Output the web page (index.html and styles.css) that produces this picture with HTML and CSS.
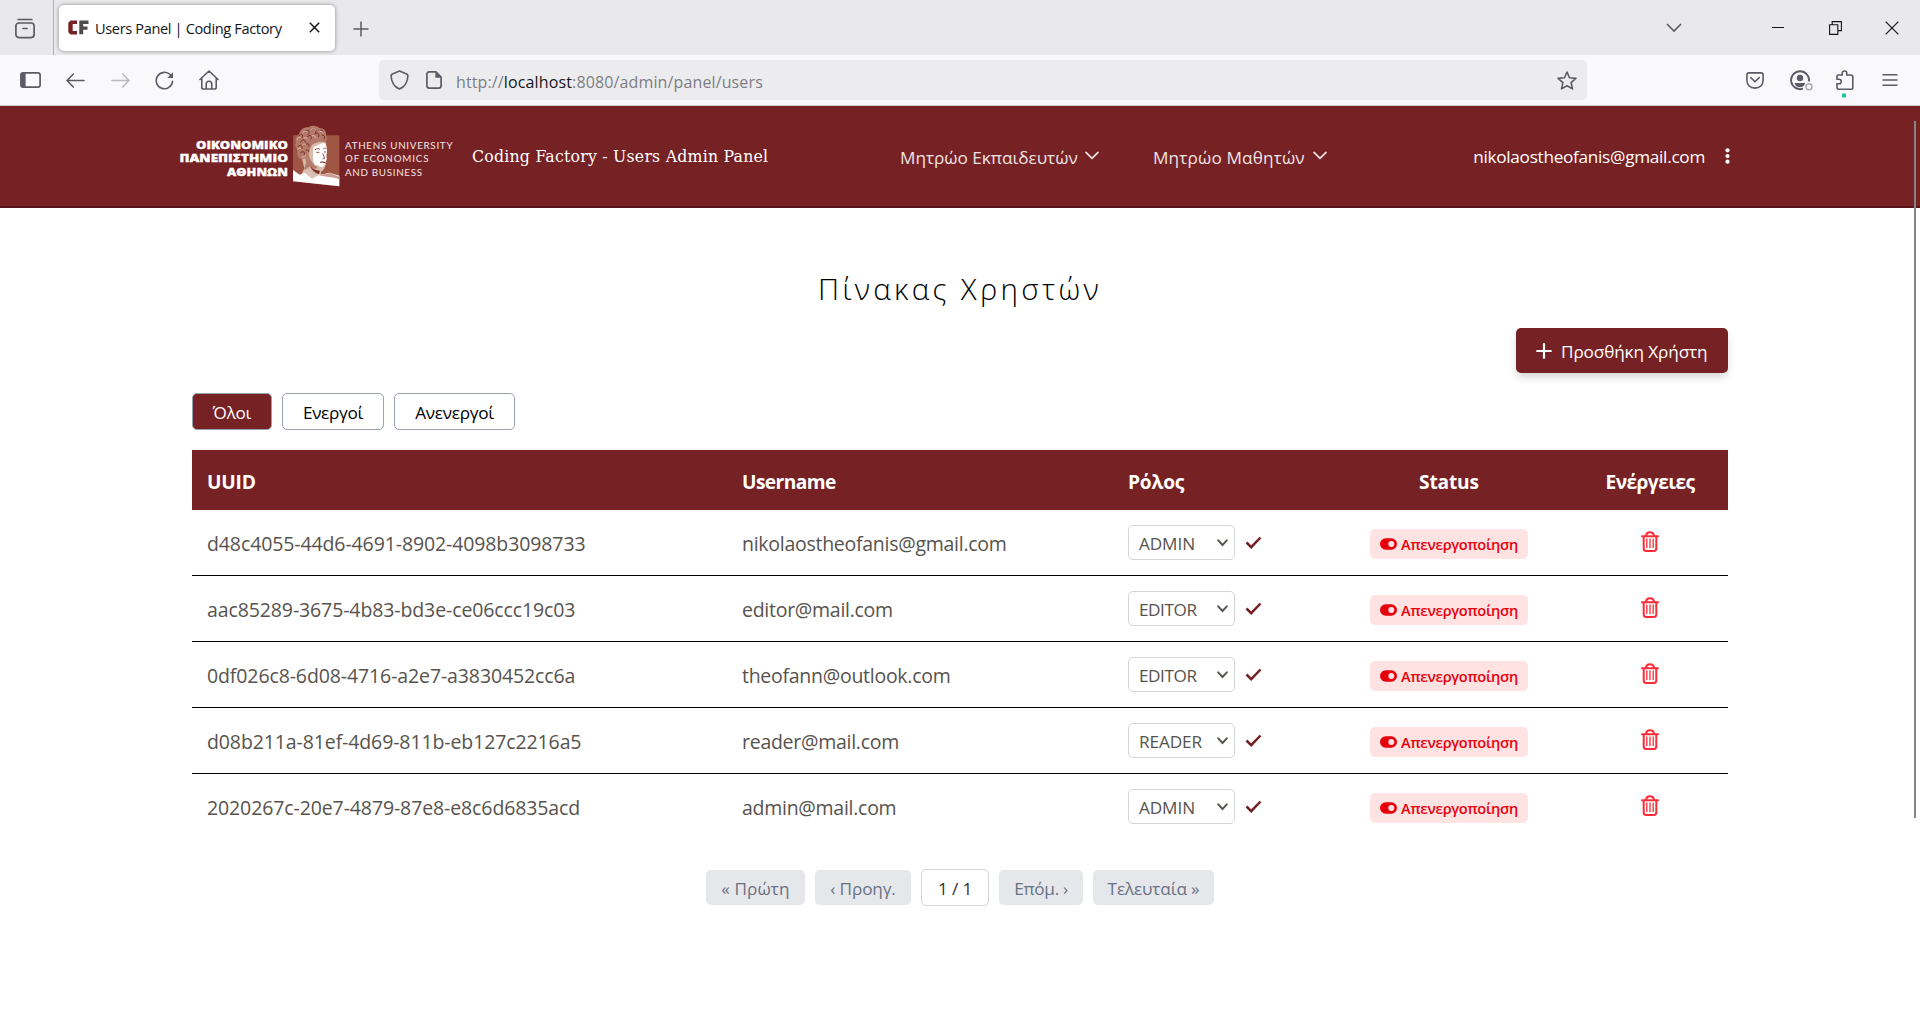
FILE: index.html
```html
<!DOCTYPE html>
<html lang="el">
<head>
<meta charset="utf-8">
<title>Users Panel | Coding Factory</title>
<link rel="stylesheet" href="styles.css">
</head>
<body>
<svg class="defs" width="0" height="0">
  <symbol id="trash" viewBox="0 0 18 21"><g fill="none" stroke="#fb2c36" stroke-linecap="round"><path stroke-width="2" d="M1 5.200h16M5 4.800C5.300 2.200 6.800 1.200 9 1.200s3.700 1 4 3.600M2.700 5.800v11.700c0 1.600.8 2.400 2.400 2.400h7.800c1.600 0 2.400-.8 2.400-2.400V5.800"/><path stroke-width="1.300" d="M5.800 8v8.500M9 8v8.500M12.200 8v8.500"/></g></symbol>
  <symbol id="toggle" viewBox="0 0 17 12"><rect y=".3" width="17" height="11.400" rx="5.700" fill="#e7000b"/><circle cx="11.300" cy="6" r="3" fill="#ffe2e2"/></symbol>
  <symbol id="check" viewBox="0 0 17 13"><path d="M1.500 6.500l4.700 4.700L15.500 1.500" fill="none" stroke="#762124" stroke-width="2.500"/></symbol>
  <symbol id="chev" viewBox="0 0 14 9"><path d="M1 1.300l6 6 6-6" fill="none" stroke="currentColor" stroke-width="1.700" stroke-linecap="round"/></symbol>
  <symbol id="caret" viewBox="0 0 11 8"><path d="M1.200 1.300l4.300 4.700 4.300-4.700" fill="none" stroke="currentColor" stroke-width="1.900" stroke-linecap="round"/></symbol>
</svg>

<div class="tabstrip">
  <div class="recent"><svg width="20" height="21" viewBox="0 0 20 21" fill="none" stroke="#5b5b66" stroke-width="1.700" stroke-linecap="round"><path d="M3.200 1.500h13.600"/><rect x=".9" y="5" width="18.200" height="14.600" rx="3"/><path d="M8 10.500h4"/></svg></div>
  <div class="tab">
    <svg width="21" height="15" viewBox="0 0 21 15"><path fill="#762124" d="M2.500.5H9V4H4.700v7H9v3.500H2.500L.3 12.300V2.700z"/><path fill="#4f4b4c" d="M11.300.5h9.200V4h-5.300v2.400h4.300v3.300h-4.300v4.500h-3.900z"/></svg>
    <span class="tab-title">Users Panel | Coding Factory</span>
    <svg class="tab-x" width="11" height="11" viewBox="0 0 11 11" stroke="#15141a" stroke-width="1.500"><path d="M.8.8l9.400 9.400M10.200.8L.8 10.200"/></svg>
  </div>
  <svg class="newtab" width="16" height="16" viewBox="0 0 16 16" stroke="#5b5b66" stroke-width="1.500"><path d="M8 .5v15M.5 8h15"/></svg>
  <div class="window-controls">
    <svg width="16" height="10" viewBox="0 0 16 10" fill="none" stroke="#5b5b66" stroke-width="1.600"><path d="M1 1l7 7 7-7"/></svg>
    <svg width="12" height="14" viewBox="0 0 12 14"><path d="M0 6.500h12" stroke="#15141a"/></svg>
    <svg width="13" height="14" viewBox="0 0 13 14" fill="none" stroke="#15141a" stroke-width="1.100"><path d="M.6 3.800h8.200v9.600H.6zM3.200 3.800V.6h9.200v9h-3.600"/></svg>
    <svg width="14" height="14" viewBox="0 0 14 14" stroke="#15141a" stroke-width="1.200"><path d="M.6.6l12.800 12.800M13.400.6L.6 13.400"/></svg>
  </div>
</div>

<div class="toolbar">
  <div class="nav-icons">
    <svg width="21" height="16" viewBox="0 0 21 16"><rect x=".9" y=".9" width="19.200" height="14.200" rx="2.200" fill="none" stroke="#5b5b66" stroke-width="1.700"/><path d="M1 1h4.600v14H1z" fill="#5b5b66"/></svg>
    <svg width="19" height="15" viewBox="0 0 19 15" fill="none" stroke="#5b5b66" stroke-width="1.600" stroke-linecap="round"><path d="M18 7.500H1.200M7.300 1L1 7.500l6.300 6.500"/></svg>
    <svg width="19" height="15" viewBox="0 0 19 15" fill="none" stroke="#b9b9c0" stroke-width="1.600" stroke-linecap="round"><path d="M1 7.500h16.800M11.700 1L18 7.500 11.700 14"/></svg>
    <svg width="19" height="19" viewBox="0 0 19 19" fill="none" stroke="#5b5b66" stroke-width="1.600" stroke-linecap="round"><path d="M17.600 10.200A8.200 8.200 0 1 1 15.500 4"/><path d="M18 1.300V7h-5.700z" fill="#5b5b66" stroke="none"/></svg>
    <svg width="20" height="20" viewBox="0 0 20 20" fill="none" stroke="#5b5b66" stroke-width="1.600" stroke-linejoin="round" stroke-linecap="round"><path d="M1 9.500L10 1l9 8.500M2.800 8.500v8.700c0 1.200.6 1.800 1.800 1.800h10.800c1.200 0 1.800-.6 1.800-1.800V8.500M7.200 19v-5c0-2 1-2.800 2.800-2.800s2.800.8 2.800 2.800v5"/></svg>
  </div>
  <div class="urlbar">
    <svg width="19" height="20" viewBox="0 0 19 20"><path d="M9.500 1l7.200 2.900c.9.400 1.200.9 1.200 1.800-.2 6.300-2.600 10.800-8.400 13.300C3.700 16.500 1.300 12 1.100 5.700c0-.9.300-1.400 1.200-1.800z" fill="none" stroke="#5b5b66" stroke-width="1.600"/></svg>
    <svg width="16" height="18" viewBox="0 0 16 18"><path d="M10 .9H3.200C1.700.9.900 1.700.900 3.200v11.600c0 1.500.8 2.300 2.300 2.300h9.600c1.500 0 2.300-.8 2.300-2.300V6z" fill="none" stroke="#5b5b66" stroke-width="1.700"/><path d="M9.300.9v5.800h6z" fill="#5b5b66"/></svg>
    <span class="url">http://<b>localhost</b>:8080/admin/panel/users</span>
    <svg width="20" height="19" viewBox="0 0 20 19"><path d="M10 1l2.500 5.800 6.400.6-4.800 4.200 1.400 6.300L10 14.700l-5.500 3.200 1.400-6.300L1.100 7.400l6.400-.6z" fill="none" stroke="#5b5b66" stroke-width="1.600" stroke-linejoin="round"/></svg>
  </div>
  <div class="tool-icons">
    <svg width="18" height="17" viewBox="0 0 18 17" fill="none" stroke="#5b5b66" stroke-width="1.600" stroke-linecap="round"><path d="M3 .9h12c1.400 0 2.100.7 2.100 2.100V8c0 5-3.300 8.100-8.100 8.100S.9 13 .9 8V3C.9 1.600 1.600.9 3 .9z"/><path d="M4.800 5.600L9 9.700l4.200-4.100"/></svg>
    <svg width="23" height="21" viewBox="0 0 23 21"><path d="M13 18.700A9 9 0 1 1 19 11.500" fill="none" stroke="#5b5b66" stroke-width="1.900"/><circle cx="10" cy="8" r="3.200" fill="#5b5b66"/><path d="M4.500 13h10.700c-.6 2.700-2.500 4.300-5.200 4.300S5 15.700 4.500 13z" fill="#5b5b66"/><circle cx="19" cy="16.800" r="3" fill="#f9f9fb" stroke="#a9a9b0" stroke-width="1.500"/></svg>
    <svg width="18" height="28" viewBox="0 0 18 28"><path d="M6.200 5V3.200c0-3 4.600-3 4.600 0V5h4c1.300 0 2 .7 2 2v11c0 .9-.3 1.200-1.200 1.200H3c-1.300 0-2-.7-2-2v-3.400h2c3 0 3-4.600 0-4.600H1V6.200C1 5.400 1.400 5 2.200 5z" fill="none" stroke="#5b5b66" stroke-width="1.600"/><path d="M6 23.500h4v4H6z" fill="#2ac3a2"/></svg>
    <svg width="16" height="14" viewBox="0 0 16 14" stroke="#5b5b66" stroke-width="1.500"><path d="M.5 1.800h15M.5 7h15M.5 12.200h15"/></svg>
  </div>
</div>

<header class="site-header">
  <svg class="logo" width="280" height="68" viewBox="0 0 280 68">
    <g class="logo-el">
      <text x="20" y="26.700" textLength="92" lengthAdjust="spacingAndGlyphs">ΟΙΚΟΝΟΜΙΚΟ</text>
      <text x="3.500" y="40.200" textLength="108.500" lengthAdjust="spacingAndGlyphs">ΠΑΝΕΠΙΣΤΗΜΙΟ</text>
      <text x="51" y="53.600" textLength="61" lengthAdjust="spacingAndGlyphs">ΑΘΗΝΩΝ</text>
    </g>
    <g transform="translate(112 0) scale(.3333)">
      <path fill="#9e5643" d="M15 40h139v153L15 178z"/>
      <path fill="#d9b9ab" d="M40 100l20-30 50-16c6 14 8 26 7 38l-2 24c-2 18-6 28-16 33l-2 25-50-4 2-30z"/>
      <path fill="#fff" d="M76 76l34-16c6 10 6 24 7 34l-4 3 3 14-4 10c-2 10-5 14-11 15-6-2-12-8-22-8l-4-18z"/>
      <path fill="#b57e6c" d="M50 90l12-2c0 22 10 36 28 50-8 4-20 0-26-4l-18 14 8-26z"/>
      <path fill="#7d3127" d="M66 132c8 9 16 13 30 14l-3 10c-10-2-21-10-27-24z"/>
      <path fill="#b47968" d="M24 62c-4-12 4-22 10-26 2-14 16-22 28-20 12-8 26-4 32 2 14 0 22 10 20 20 6 8 3 18-3 24-10-4-22-4-32 2-8 4-12 12-14 22l-8 14c-6 14-16 14-24 8-6-8-8-16-3-24-8-8-10-14-6-22z"/>
      <g fill="none" stroke="#71251f" stroke-width="2.800" stroke-linecap="round"><path d="M33 42c6-10 14-4 10 4m8-18c10-8 17 2 9 9m13-15c10-6 17 4 9 10m15-8c9 0 13 8 5 11M38 60c4-10 14-8 14 0m6-16c8-8 16-2 11 7m11-15c8-6 16 0 12 8m11-4c7-2 10 6 5 12M30 74c6-8 14-4 12 5m10-10c6-8 13-3 11 4M38 92c8-6 14-2 12 7m4-14c4-4 8-2 8 3"/></g>
      <g fill="none" stroke="#ecd4c8" stroke-width="2.300" stroke-linecap="round"><path d="M28 52c2-7 6-8 9-6m8-15c7-6 12-4 14 0m12-9c7-4 13-2 13 2m12 4c7-2 11 3 9 7M48 49c5-5 9-2 9 2m15-8c6-5 10-2 10 3M29 83c3-7 8-6 11-2m4-12c4-5 8-4 9 0M42 105c6 2 9-2 11-7"/></g>
      <path fill="none" stroke="#8f4a3c" stroke-width="3" d="M80 84c6-5 11-5 16-2M106 81c3-3 6-3 9-1M85 91h9m14-1h6M104 94l6 15-6 2"/>
      <path fill="none" stroke="#71251f" stroke-width="3.500" d="M97 121c6-2 10-1 15 1"/>
      <path fill="#dac1b6" d="M48 142l46 20 3 16-63-8z"/>
      <path fill="#fff" d="M15 144l20 14 15-6 22 18 20-10 32-8 30 9v32L15 178z"/>
      <path fill="#c99e90" d="M93 160l33-7 28 11v8c-22-8-42-7-61-12z"/>
    </g>
    <g class="logo-en">
      <text x="169" y="26.700" textLength="107.500">ATHENS UNIVERSITY</text>
      <text x="169" y="40.200" textLength="83.500">OF ECONOMICS</text>
      <text x="169" y="53.600" textLength="77">AND BUSINESS</text>
    </g>
  </svg>
  <h1 class="brand">Coding Factory - Users Admin Panel</h1>
  <nav class="menu">
    <span class="menu-item"><span class="m1">Μητρώο Εκπαιδευτών</span><svg width="14" height="9"><use href="#chev"/></svg></span>
    <span class="menu-item"><span class="m2">Μητρώο Μαθητών</span><svg width="14" height="9"><use href="#chev"/></svg></span>
  </nav>
  <div class="account"><span>nikolaostheofanis@gmail.com</span>
    <svg width="5" height="16" viewBox="0 0 5 16" fill="#fff"><circle cx="2.500" cy="2.300" r="2.100"/><circle cx="2.500" cy="8" r="2.100"/><circle cx="2.500" cy="13.700" r="2.100"/></svg></div>
</header>

<main class="content">
  <h2 class="title">Πίνακας Χρηστών</h2>
  <div class="actions"><button class="add"><svg width="16" height="16" viewBox="0 0 16 16" stroke="#fff" stroke-width="2.200" stroke-linecap="round"><path d="M8 1.200v13.600M1.200 8h13.600"/></svg><span>Προσθήκη Χρήστη</span></button></div>
  <div class="filters"><button class="filter f1 active">Όλοι</button><button class="filter f2">Ενεργοί</button><button class="filter f3">Ανενεργοί</button></div>
  <table class="users">
    <colgroup><col class="c1"><col class="c2"><col class="c3"><col class="c4"><col class="c5"></colgroup>
    <thead><tr><th>UUID</th><th class="tight">Username</th><th>Ρόλος</th><th class="mid">Status</th><th class="mid tight">Ενέργειες</th></tr></thead>
    <tbody>
      <tr><td>d48c4055-44d6-4691-8902-4098b3098733</td><td class="mail">nikolaostheofanis@gmail.com</td><td><div class="role"><span class="select">ADMIN<svg width="11" height="8"><use href="#caret"/></svg></span><svg width="17" height="13"><use href="#check"/></svg></div></td><td class="mid"><span class="badge"><svg width="17" height="12"><use href="#toggle"/></svg>Απενεργοποίηση</span></td><td class="mid"><svg class="bin" width="18" height="21"><use href="#trash"/></svg></td></tr>
      <tr><td>aac85289-3675-4b83-bd3e-ce06ccc19c03</td><td class="mail">editor@mail.com</td><td><div class="role"><span class="select narrow">EDITOR<svg width="11" height="8"><use href="#caret"/></svg></span><svg width="17" height="13"><use href="#check"/></svg></div></td><td class="mid"><span class="badge"><svg width="17" height="12"><use href="#toggle"/></svg>Απενεργοποίηση</span></td><td class="mid"><svg class="bin" width="18" height="21"><use href="#trash"/></svg></td></tr>
      <tr><td>0df026c8-6d08-4716-a2e7-a3830452cc6a</td><td class="mail">theofann@outlook.com</td><td><div class="role"><span class="select narrow">EDITOR<svg width="11" height="8"><use href="#caret"/></svg></span><svg width="17" height="13"><use href="#check"/></svg></div></td><td class="mid"><span class="badge"><svg width="17" height="12"><use href="#toggle"/></svg>Απενεργοποίηση</span></td><td class="mid"><svg class="bin" width="18" height="21"><use href="#trash"/></svg></td></tr>
      <tr><td>d08b211a-81ef-4d69-811b-eb127c2216a5</td><td class="mail">reader@mail.com</td><td><div class="role"><span class="select">READER<svg width="11" height="8"><use href="#caret"/></svg></span><svg width="17" height="13"><use href="#check"/></svg></div></td><td class="mid"><span class="badge"><svg width="17" height="12"><use href="#toggle"/></svg>Απενεργοποίηση</span></td><td class="mid"><svg class="bin" width="18" height="21"><use href="#trash"/></svg></td></tr>
      <tr><td>2020267c-20e7-4879-87e8-e8c6d6835acd</td><td class="mail">admin@mail.com</td><td><div class="role"><span class="select">ADMIN<svg width="11" height="8"><use href="#caret"/></svg></span><svg width="17" height="13"><use href="#check"/></svg></div></td><td class="mid"><span class="badge"><svg width="17" height="12"><use href="#toggle"/></svg>Απενεργοποίηση</span></td><td class="mid"><svg class="bin" width="18" height="21"><use href="#trash"/></svg></td></tr>
    </tbody>
  </table>
  <div class="pager"><span class="page p1">« Πρώτη</span><span class="page p2">‹ Προηγ.</span><span class="page current">1 / 1</span><span class="page p4">Επόμ. ›</span><span class="page p5">Τελευταία »</span></div>
</main>
<div class="scrollbar"></div>
</body>
</html>
```
FILE: styles.css
```css
* { box-sizing: border-box; }
body {
  margin: 0;
  width: 1920px;
  height: 1020px;
  overflow: hidden;
  position: relative;
  background: #fff;
  color: #000;
  font-family: "Open Sans", "Noto Sans", sans-serif;
  font-size: 17.2px;
}
svg { display: block; flex: none; }
.defs { position: absolute; }
button { font: inherit; margin: 0; }

/* browser tab strip */
.tabstrip { height: 55px; background: #e9e9eb; display: flex; align-items: center; }
.recent { width: 54px; height: 55px; border-right: 1px solid #b0b0b6; padding: 18px 0 0 15px; }
.tab {
  width: 276px; height: 46px; margin-left: 5px; padding: 0 15px 0 9px;
  display: flex; align-items: center;
  background: #fff; border-radius: 5px; box-shadow: 0 0 4px rgba(0, 0, 0, .4);
}
.tab-title { margin-left: 6px; padding-top: 1px; font-size: 14.6px; letter-spacing: -.37px; color: #15141a; flex: 1; white-space: nowrap; }
.newtab { margin-left: 18px; margin-top: 2px; }
.window-controls { margin-left: auto; margin-right: 21px; display: flex; align-items: center; }
.window-controls svg:nth-child(2) { margin-left: 90px; }
.window-controls svg:nth-child(3) { margin-left: 45px; }
.window-controls svg:nth-child(4) { margin-left: 43px; }

/* browser toolbar */
.toolbar { height: 51px; background: #f9f9fb; border-bottom: 1px solid #ccccd1; display: flex; align-items: center; }
.nav-icons { width: 379px; padding-left: 20px; display: flex; align-items: center; gap: 25.300px; }
.urlbar {
  width: 1208px; height: 40px; padding: 0 10px 0 11px; border-radius: 5px;
  background: #ececee; display: flex; align-items: center;
}
.urlbar svg:nth-child(2) { margin-left: 17px; }
.url { flex: 1; margin-left: 14px; padding-top: 3px; font-size: 16px; letter-spacing: .13px; color: #7d7d83; }
.url b { font-weight: 400; color: #15141a; }
.tool-icons { margin-left: auto; margin-right: 22px; display: flex; align-items: center; gap: 26px; }
.tool-icons svg:nth-child(3) { margin: 7px 2px 0 -3px; }

/* site header */
.site-header {
  height: 102px; background: #762124; border-bottom: 2px solid #5a1519; color: #fff;
  display: flex; align-items: center; padding: 0 190px 0 176px;
}
.logo { margin-top: -1px; }
.logo-el { font: 800 9.900px "Open Sans", sans-serif; fill: #fff; stroke: #fff; stroke-width: .3px; }
.logo-en { font: 400 9.800px Lato, sans-serif; fill: #f3e6e4; }
.brand { margin: 0 0 0 16px; font: 400 17.5px "DejaVu Serif Condensed", "DejaVu Serif", serif; letter-spacing: .22px; white-space: nowrap; width: 428px; }
.menu { display: flex; gap: 53px; color: #eee3e3; }
.menu-item { display: flex; align-items: center; gap: 8px; white-space: nowrap; }
.menu-item svg { margin-top: -2px; margin-right: 1px; }
.menu-item span { padding-top: 2px; }
.m1 { width: 177px; letter-spacing: -.04px; }
.m2 { width: 152px; letter-spacing: .13px; }
.account { margin-left: auto; display: flex; align-items: center; gap: 20px; letter-spacing: -.29px; }
.account span { padding-top: 1px; }

/* page content */
.content { padding: 0 192px; }
.title { margin: 58px 0 0; height: 46px; line-height: 46px; text-align: center; font-size: 29.5px; font-weight: 300; letter-spacing: 3.350px; }
.actions { margin-top: 16px; display: flex; justify-content: flex-end; }
.add {
  width: 212px; height: 45px; padding: 0 0 0 20px; border: 0; border-radius: 5px;
  display: flex; align-items: center; gap: 9px; color: #fff; background: #762124;
  letter-spacing: -.13px; box-shadow: 0 5px 8px -1px rgba(0, 0, 0, .17);
}
.add span { padding-top: 1px; }
.filters { margin-top: 20px; display: flex; gap: 10px; }
.filter { height: 37px; padding: 1px 0 0; border: 1px solid #99a1af; border-radius: 5px; background: #fff; color: #000; letter-spacing: -.3px; }
.filter.active { background: #762124; color: #fff; }
.f1 { width: 80px; }
.f2 { width: 102px; }
.f3 { width: 121px; }

.users { margin-top: 20px; width: 1536px; table-layout: fixed; border-collapse: separate; border-spacing: 0; }
.c1 { width: 535px; }
.c2 { width: 386px; }
.c3 { width: 257px; }
.c4 { width: 158px; }
.c5 { width: 200px; }
.users th { height: 60px; padding: 3px 15px 0; text-align: left; background: #762124; color: #fff; font-size: 19.2px; font-weight: 700; letter-spacing: -.2px; white-space: nowrap; }
.users th.tight { letter-spacing: -.6px; }
.users td { height: 66px; padding: 2px 15px 0; border-bottom: 1px solid #000; font-size: 19.5px; letter-spacing: -.11px; color: #57534e; white-space: nowrap; }
.users td.mail { letter-spacing: -.27px; }
.users tr:last-child td { border-bottom: 0; padding-top: 1px; }
.users .mid { text-align: center; padding-left: 0; padding-right: 0; }
.users th.mid:last-child, .users td.mid:last-child { padding-left: 44px; }
.role { display: flex; align-items: center; gap: 10px; margin-top: -2px; }
.select { width: 107px; height: 35px; padding: 1px 6px 0 10px; border: 1px solid #d1d5dc; border-radius: 5px; display: flex; align-items: center; justify-content: space-between; font-size: 17.2px; }
.select.narrow { letter-spacing: -.45px; }
.badge {
  width: 158px; height: 30px; border-radius: 5px; background: #ffe2e2; color: #e7000b;
  display: inline-flex; align-items: center; justify-content: center; gap: 4px;
  font-size: 14.6px; font-weight: 600; letter-spacing: -.3px; vertical-align: middle;
}
.bin { margin: -5px auto 0; }

.pager { margin-top: 29px; display: flex; justify-content: center; align-items: center; gap: 10px; }
.page { height: 35px; padding-top: 2px; display: flex; align-items: center; justify-content: center; border-radius: 5px; background: #e5e7eb; color: #6a7282; white-space: nowrap; letter-spacing: -.15px; }
.p1 { width: 99px; letter-spacing: .1px; }
.p2 { width: 96px; }
.page.current { width: 68px; height: 37px; background: #fff; border: 1px solid #d1d5dc; color: #333; }
.p4 { width: 84px; letter-spacing: -.3px; }
.p5 { width: 121px; }

.scrollbar { position: absolute; left: 1914px; top: 121px; width: 2px; height: 697px; background: #858585; }
```
